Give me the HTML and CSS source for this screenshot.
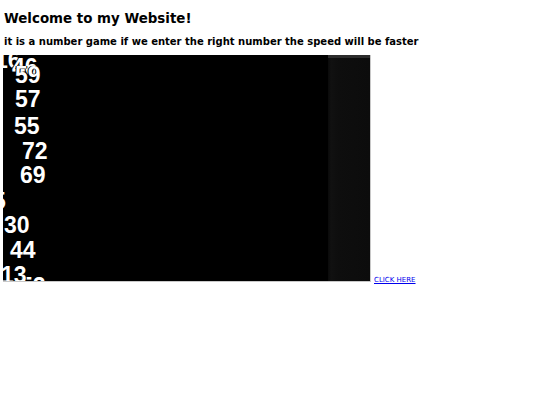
FILE: index.html
```html
<!DOCTYPE html>
<html>
<head>
<meta charset="utf-8">
<title>Number game</title>
<link rel="stylesheet" href="styles.css">
</head>
<body>
<h1 class="title">Welcome to my Website!</h1>
<h3 class="subtitle">it is a number game if we enter the right number the speed will be faster</h3>
<div class="stage-row">
  <div class="stage">
    <div class="scroll-col"></div>
    <span class="num" style="left:-8px;top:-6px">16</span>
    <span class="num" style="left:9px;top:1px">46</span>
    <span class="num" style="left:12px;top:9px">59</span>
    <span class="num" style="left:12px;top:33px">57</span>
    <span class="num" style="left:11px;top:60px">55</span>
    <span class="num" style="left:19px;top:85px">72</span>
    <span class="num" style="left:17px;top:109px">69</span>
    <span class="num" style="left:-10px;top:135px">5</span>
    <span class="num" style="left:1px;top:159px">30</span>
    <span class="num" style="left:7px;top:184px">44</span>
    <span class="num" style="left:17px;top:220px">52</span>
    <span class="num" style="left:-2px;top:209px">13</span>
  </div><a class="link" href="#">CLICK HERE</a>
</div>
</body>
</html>
```

FILE: styles.css
```css
html, body {
  margin: 0;
  padding: 0;
  background: #ffffff;
}
body {
  padding: 0 4px;
  font-family: "DejaVu Sans", Verdana, sans-serif;
  color: #000;
}
.title {
  font-size: 13.4px;
  line-height: 16px;
  font-weight: bold;
  margin: 10.5px 0 0 0;
}
.subtitle {
  font-size: 10px;
  line-height: 12px;
  font-weight: bold;
  margin: 9px 0 0 0;
}
.stage-row {
  margin: 7.5px 0 0 -1px;
  font-size: 7px;
}
.stage {
  display: inline-block;
  position: relative;
  width: 367px;
  height: 226px;
  background: #000;
  overflow: hidden;
  border-right: 1px solid #c8c8c8;
  border-bottom: 1px solid #c8c8c8;
  vertical-align: baseline;
}
.scroll-col {
  position: absolute;
  top: 0;
  right: 0;
  width: 42px;
  height: 100%;
  background: linear-gradient(to right, #0a0a0a 0, #111 3px, #0e0e0e 10px, #0c0c0c 100%);
  border-top: 3px solid #2c2c2c;
  box-sizing: border-box;
}
.num {
  position: absolute;
  font-family: "Liberation Sans", Arial, sans-serif;
  font-weight: bold;
  font-size: 23px;
  line-height: 1;
  color: #fff;
  text-shadow: 0 0 1px #000, 1px 0 0 #000, -1px 0 0 #000;
}
.link {
  color: #0000ee;
  text-decoration: underline;
  font-family: "DejaVu Sans", Verdana, sans-serif;
  font-size: 7px;
  margin-left: 3px;
}
```
